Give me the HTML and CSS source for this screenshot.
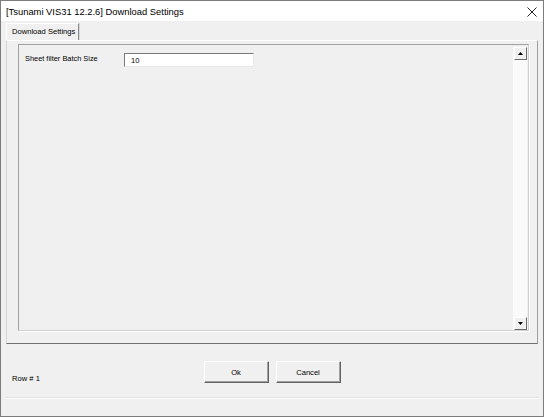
FILE: index.html
```html
<!DOCTYPE html>
<html>
<head>
<meta charset="utf-8">
<link rel="stylesheet" href="styles.css">
</head>
<body>
<div class="window">
  <div class="titlebar">
    <span class="title">[Tsunami VIS31 12.2.6] Download Settings</span>
    <svg class="close" width="10" height="10" viewBox="0 0 10 10"><path d="M0.5 0.5 L9.5 9.5 M9.5 0.5 L0.5 9.5" stroke="#222" stroke-width="1" fill="none"/></svg>
  </div>
  <div class="client">
    <div class="tabs">
      <div class="tab">Download Settings</div>
    </div>
    <div class="page">
      <div class="frame">
        <div class="frame-body">
          <div class="field">
            <span class="label">Sheet filter Batch Size</span>
            <div class="textbox">10</div>
          </div>
        </div>
        <div class="scrollbar">
          <div class="sbtn"><svg width="5" height="3" viewBox="0 0 5 3"><path d="M2.5 0 L5 3 L0 3 Z" fill="#000"/></svg></div>
          <div class="track"></div>
          <div class="sbtn"><svg width="5" height="3" viewBox="0 0 5 3"><path d="M0 0 L5 0 L2.5 3 Z" fill="#000"/></svg></div>
        </div>
      </div>
    </div>
    <div class="footer">
      <span class="row-label">Row # 1</span>
      <div class="buttons">
        <div class="btn">Ok</div>
        <div class="btn">Cancel</div>
      </div>
      <span></span>
    </div>
    <div class="statusline"></div>
  </div>
</div>
</body>
</html>
```
FILE: styles.css
```css
html, body {
  margin: 0;
  padding: 0;
  background: #f0f0f0;
}
.window {
  width: 544px;
  height: 417px;
  box-sizing: border-box;
  border: 1px solid #7c7c7c;
  background: #f0f0f0;
  display: flex;
  flex-direction: column;
  font-family: "Liberation Sans", Arial, sans-serif;
  color: #000;
  overflow: hidden;
}
.titlebar {
  height: 20px;
  background: #fff;
  display: flex;
  align-items: center;
  justify-content: space-between;
  padding: 0 5px 0 5px;
  flex: none;
}
.title {
  font-size: 9.4px;
}
.close {
  margin-right: 1px;
  margin-top: 2px;
}
.client {
  flex: 1;
  display: flex;
  flex-direction: column;
  padding: 2px 5px 0 5px;
}
.tabs {
  display: flex;
  height: 17px;
  flex: none;
}
.tab {
  box-sizing: border-box;
  width: 73px;
  height: 17px;
  padding: 3px 0 0 5px;
  font-size: 7.6px;
  border-top: 1px solid #fff;
  border-left: 1px solid #fff;
  border-right: 1px solid #8a8a8a;
  box-shadow: 1px 0 0 #d8d8d8;
}
.page {
  box-sizing: border-box;
  height: 304px;
  flex: none;
  border-top: 1px solid #fff;
  border-left: 1px solid #d5d5d5;
  border-right: 1px solid #a0a0a0;
  border-bottom: 1px solid #707070;
  padding: 3px 8px 12px 11px;
  display: flex;
}
.frame {
  flex: 1;
  display: flex;
  border-top: 1px solid #a0a0a0;
  border-left: 1px solid #a0a0a0;
  border-right: 1px solid #d0d0d0;
  border-bottom: 1px solid #d0d0d0;
  box-shadow: 1px 1px 0 #fff;
}
.frame-body {
  flex: 1;
  padding: 8px 0 0 6px;
}
.field {
  display: flex;
  align-items: flex-start;
}
.label {
  width: 99px;
  font-size: 7.4px;
  padding-top: 1px;
}
.textbox {
  box-sizing: border-box;
  width: 130px;
  height: 14px;
  background: #fff;
  border-top: 1px solid #7a7a7a;
  border-left: 1px solid #7a7a7a;
  border-right: 1px solid #e8e8e8;
  border-bottom: 1px solid #e8e8e8;
  font-size: 7.6px;
  padding: 2px 0 0 6px;
}
.scrollbar {
  width: 13px;
  display: flex;
  flex-direction: column;
  margin: 2px 1px 0 0;
  background: #f7f7f7;
  box-shadow: -1px 0 0 #fbfbfb;
}
.sbtn {
  box-sizing: border-box;
  height: 13px;
  display: flex;
  align-items: center;
  justify-content: center;
  background: #f0f0f0;
  border-top: 1px solid #fff;
  border-left: 1px solid #fff;
  border-right: 1px solid #6a6a6a;
  border-bottom: 1px solid #6a6a6a;
}
.track {
  flex: 1;
  background: #fafafa;
}
.footer {
  display: grid;
  grid-template-columns: 1fr auto 1fr;
  align-items: center;
  padding-top: 17px;
  height: 22px;
  flex: none;
}
.row-label {
  font-size: 7.6px;
  padding-left: 6px;
  padding-top: 12px;
}
.buttons {
  display: flex;
  gap: 7px;
}
.btn {
  box-sizing: border-box;
  width: 65px;
  height: 22px;
  display: flex;
  align-items: center;
  justify-content: center;
  font-size: 7.6px;
  background: #f0f0f0;
  border-top: 1px solid #fff;
  border-left: 1px solid #fff;
  border-right: 1px solid #646464;
  border-bottom: 1px solid #646464;
  box-shadow: inset -1px -1px 0 #a0a0a0;
}
.statusline {
  margin-top: 15px;
  border-top: 1px solid #fbfbfb;
  box-shadow: 0 -1px 0 #e3e3e3;
  flex: none;
}
```
